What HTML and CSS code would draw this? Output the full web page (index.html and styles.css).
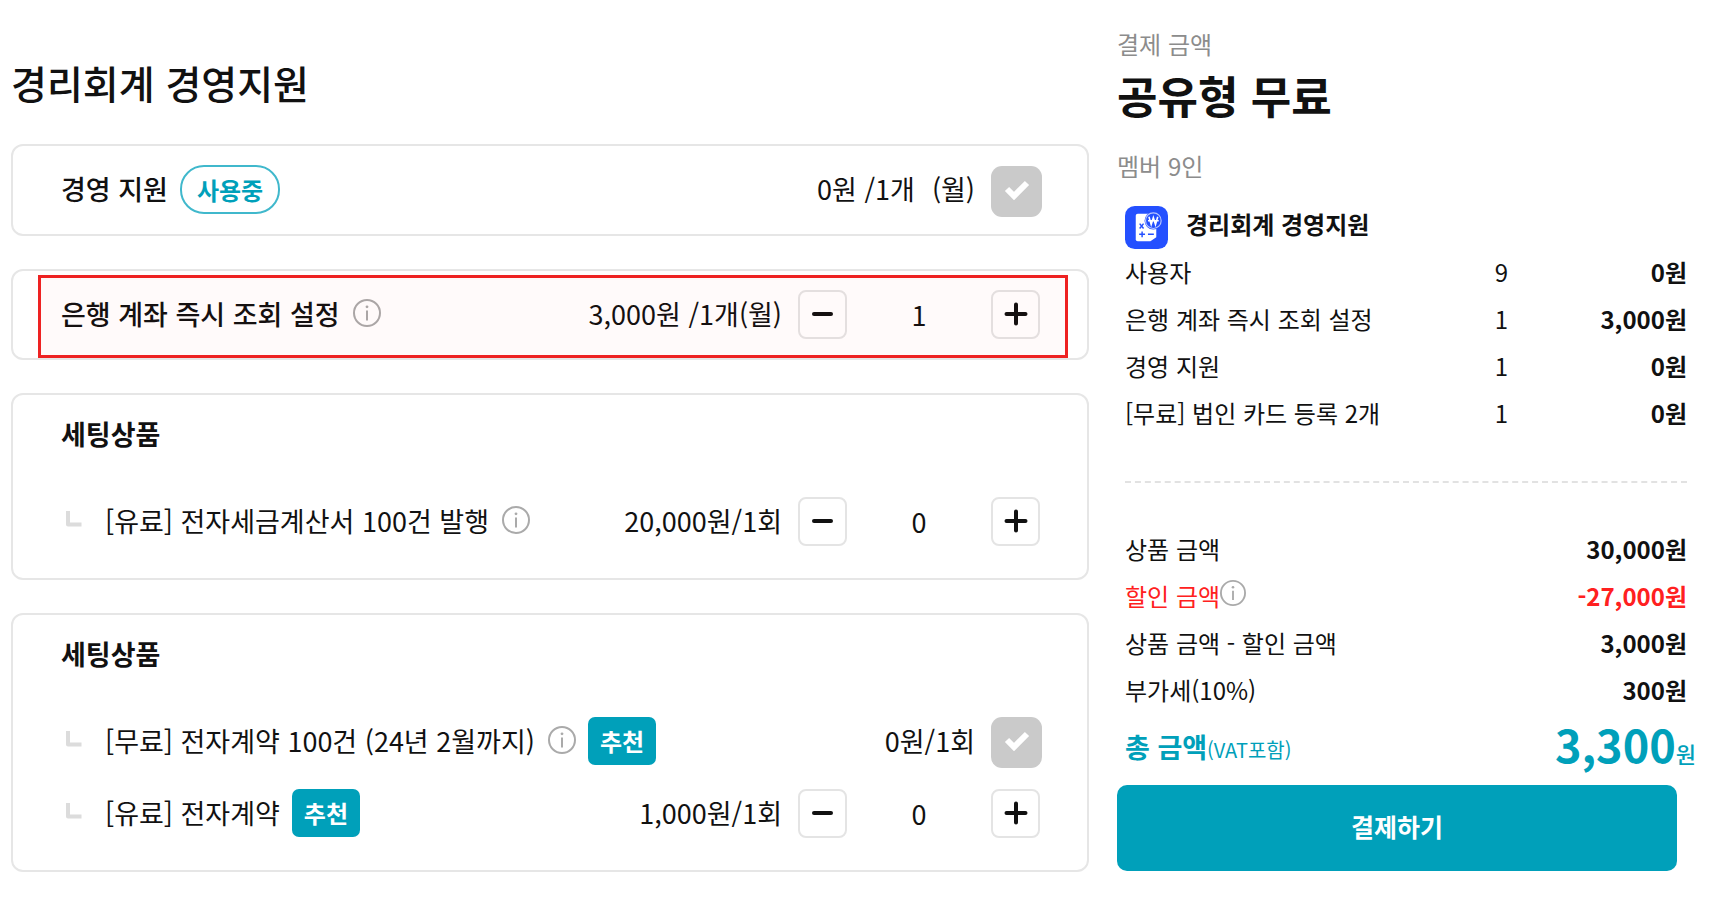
FILE: index.html
```html
<!DOCTYPE html>
<html lang="ko">
<head>
<meta charset="utf-8">
<meta name="viewport" content="width=device-width, initial-scale=1">
<title>경리회계 경영지원</title>
<link rel="stylesheet" href="styles.css">
</head>
<body>
<svg class="sprite" aria-hidden="true">
  <symbol id="info" viewBox="0 0 28 28">
    <circle cx="14" cy="14" r="13" fill="none" stroke="currentColor" stroke-width="2"/>
    <path d="M14 11.5V21.5" fill="none" stroke="currentColor" stroke-width="2"/>
    <circle cx="14" cy="7.8" r="1.4" fill="currentColor"/>
  </symbol>
  <symbol id="branch" viewBox="0 0 16 17">
    <path d="M2 1V14.5H15.5" fill="none" stroke="currentColor" stroke-width="4" stroke-linejoin="round"/>
  </symbol>
  <symbol id="minus" viewBox="0 0 24 24">
    <path d="M3 12H20" fill="none" stroke="currentColor" stroke-width="4" stroke-linecap="round"/>
  </symbol>
  <symbol id="plus" viewBox="0 0 24 24">
    <path d="M2.500 12H21.500M12 2.500V21.500" fill="none" stroke="currentColor" stroke-width="4" stroke-linecap="round"/>
  </symbol>
  <symbol id="check" viewBox="0 0 26 20">
    <path d="M3 9L10 16L23 3" fill="none" stroke="currentColor" stroke-width="6"/>
  </symbol>
</svg>
<div class="page">
  <main class="products">
    <h1 class="title">경리회계 경영지원</h1>

    <section class="card card-single">
      <div class="row">
        <label class="name strong" for="support">경영 지원</label>
        <span class="pill">사용중</span>
        <span class="price"><span>0원 /1개</span><span>(월)</span></span>
        <span class="check"><input type="checkbox" id="support" checked disabled><svg><use href="#check"/></svg></span>
      </div>
    </section>

    <section class="card card-single">
      <div class="row">
        <label class="name strong" for="bank">은행 계좌 즉시 조회 설정</label>
        <button class="info" type="button" aria-label="안내"><svg><use href="#info"/></svg></button>
        <span class="price">3,000원 /1개(월)</span>
        <span class="stepper">
          <button type="button" aria-label="빼기"><svg><use href="#minus"/></svg></button>
          <input type="text" id="bank" inputmode="numeric" value="1">
          <button type="button" aria-label="더하기"><svg><use href="#plus"/></svg></button>
        </span>
      </div>
      <div class="highlight"></div>
    </section>

    <section class="card card-group">
      <h2 class="group-title">세팅상품</h2>
      <div class="row">
        <svg class="branch"><use href="#branch"/></svg>
        <label class="name" for="invoice">[유료] 전자세금계산서 100건 발행</label>
        <button class="info" type="button" aria-label="안내"><svg><use href="#info"/></svg></button>
        <span class="price">20,000원/1회</span>
        <span class="stepper">
          <button type="button" aria-label="빼기"><svg><use href="#minus"/></svg></button>
          <input type="text" id="invoice" inputmode="numeric" value="0">
          <button type="button" aria-label="더하기"><svg><use href="#plus"/></svg></button>
        </span>
      </div>
    </section>

    <section class="card card-group">
      <h2 class="group-title">세팅상품</h2>
      <div class="row">
        <svg class="branch"><use href="#branch"/></svg>
        <label class="name" for="contract-free">[무료] 전자계약 100건 (24년 2월까지)</label>
        <button class="info" type="button" aria-label="안내"><svg><use href="#info"/></svg></button>
        <span class="badge">추천</span>
        <span class="price">0원/1회</span>
        <span class="check"><input type="checkbox" id="contract-free" checked disabled><svg><use href="#check"/></svg></span>
      </div>
      <div class="row">
        <svg class="branch"><use href="#branch"/></svg>
        <label class="name" for="contract">[유료] 전자계약</label>
        <span class="badge">추천</span>
        <span class="price">1,000원/1회</span>
        <span class="stepper">
          <button type="button" aria-label="빼기"><svg><use href="#minus"/></svg></button>
          <input type="text" id="contract" inputmode="numeric" value="0">
          <button type="button" aria-label="더하기"><svg><use href="#plus"/></svg></button>
        </span>
      </div>
    </section>
  </main>

  <aside class="summary">
    <p class="caption">결제 금액</p>
    <h2 class="plan">공유형 무료</h2>
    <p class="caption">멤버 9인</p>

    <div class="brand">
      <svg class="brand-icon" viewBox="0 0 44 44" aria-hidden="true">
        <rect width="44" height="44" rx="10" fill="#2450ff"/>
        <path d="M13 8H32V32L26 36H13Q11 36 11 34V10Q11 8 13 8Z" fill="#fff"/>
        <path d="M15 18L19 23M19 18L15 23M14.500 29H20.500M17.500 26V32M23.500 29H29.500" stroke="#2450ff" stroke-width="1.500" fill="none"/>
        <circle cx="29" cy="15" r="9" fill="#2450ff"/>
        <circle cx="29" cy="15" r="8" fill="#2450ff" stroke="#b9c6ff" stroke-width="1.200"/>
        <path d="M24.500 11L26.800 19L29 12L31.200 19L33.500 11M23.500 15H34.500" stroke="#fff" stroke-width="1.600" fill="none"/>
      </svg>
      <h3 class="brand-name">경리회계 경영지원</h3>
    </div>

    <table class="lines orders">
      <tr><th scope="row">사용자</th><td class="qty">9</td><td class="amount">0원</td></tr>
      <tr><th scope="row">은행 계좌 즉시 조회 설정</th><td class="qty">1</td><td class="amount">3,000원</td></tr>
      <tr><th scope="row">경영 지원</th><td class="qty">1</td><td class="amount">0원</td></tr>
      <tr><th scope="row">[무료] 법인 카드 등록 2개</th><td class="qty">1</td><td class="amount">0원</td></tr>
    </table>

    <hr class="divider">

    <table class="lines">
      <tr><th scope="row">상품 금액</th><td class="amount">30,000원</td></tr>
      <tr class="discount"><th scope="row"><span class="with-info">할인 금액<button class="info small" type="button" aria-label="안내"><svg><use href="#info"/></svg></button></span></th><td class="amount">-27,000원</td></tr>
      <tr><th scope="row">상품 금액 - 할인 금액</th><td class="amount">3,000원</td></tr>
      <tr><th scope="row">부가세(10%)</th><td class="amount">300원</td></tr>
    </table>

    <div class="total">
      <span class="total-label">총 금액<small>(VAT포함)</small></span>
      <strong class="total-value">3,300<small>원</small></strong>
    </div>
    <button class="pay" type="button">결제하기</button>
  </aside>
</div>
</body>
</html>
```
FILE: styles.css
```css
* { box-sizing: border-box; }

body {
  margin: 0;
  background: #fff;
  color: #111;
  font-family: "Noto Sans CJK KR", "Noto Sans", sans-serif;
  font-size: 27px;
  line-height: 40px;
}

h1, h2, h3, p { margin: 0; }

button, input { font: inherit; color: inherit; }

button { padding: 0; cursor: pointer; }

.sprite { display: none; }

.page {
  display: grid;
  grid-template-columns: minmax(0, 1078fr) minmax(0, 579fr);
  column-gap: 28px;
  padding: 0 13px 24px 11px;
}

/* Product list */
.products {
  display: flex;
  flex-direction: column;
  gap: 33px;
}

.title {
  padding-top: 53px;
  font-size: 39px;
  font-weight: 500;
  line-height: 58px;
}

.card {
  position: relative;
  border: 2px solid #e6e6e6;
  border-radius: 12px;
  padding: 0 45px 0 48px;
}

.card-single { padding-top: 19px; padding-bottom: 17px; }

.card-group {
  display: flex;
  flex-direction: column;
  gap: 21px;
  padding-top: 19px;
  padding-bottom: 30px;
}

.group-title {
  margin-bottom: 22px;
  font-size: 27px;
  font-weight: 700;
}

.row {
  display: flex;
  align-items: center;
  min-height: 51px;
}

.name, .price { padding-bottom: 4px; white-space: nowrap; }

.strong { font-weight: 500; }

.branch {
  flex: none;
  width: 16px;
  height: 17px;
  margin: 0 23px 8px 5px;
  color: #dcdcdc;
}

.info {
  flex: none;
  width: 28px;
  height: 28px;
  margin: 0 0 6px 13px;
  border: 0;
  background: none;
  color: #aaa;
}

.info svg { display: block; width: 100%; height: 100%; }

.pill, .badge {
  flex: none;
  margin: 0 0 3px 12px;
  font-size: 24px;
  font-weight: 700;
}

.pill {
  padding: 0 15px;
  border: 2px solid #40b8cc;
  border-radius: 24px;
  color: #00a0ba;
  line-height: 45px;
}

.badge {
  padding: 0 12px;
  border-radius: 7px;
  background: #00a0ba;
  color: #fff;
  line-height: 48px;
}

.price {
  display: flex;
  gap: 17px;
  margin-left: auto;
  margin-right: 16px;
}

.check {
  display: grid;
  place-items: center;
  width: 51px;
  height: 51px;
  border-radius: 11px;
  background: #cacaca;
  color: #fff;
}

.check input, .check svg { grid-area: 1 / 1; }

.check input {
  width: 100%;
  height: 100%;
  margin: 0;
  appearance: none;
}

.check svg { width: 26px; height: 20px; margin-bottom: 3px; }

.stepper {
  display: flex;
  width: 244px;
  padding: 0 2px 2px 0;
}

.stepper button {
  display: grid;
  place-items: center;
  flex: none;
  width: 49px;
  height: 49px;
  border: 2px solid #e4e4e4;
  border-radius: 8px;
  background: none;
}

.stepper svg { width: 24px; height: 24px; margin-bottom: 2px; }

.stepper input {
  flex: 1;
  min-width: 0;
  padding: 0;
  border: 0;
  background: none;
  text-align: center;
}

.highlight {
  position: absolute;
  inset: 4px 19px 0 25px;
  border: 3px solid #ee2222;
  background: rgba(255, 0, 0, 0.02);
  pointer-events: none;
}

/* Payment summary */
.summary {
  padding-top: 26px;
  font-size: 24px;
}

.caption { color: #8c8c8c; line-height: 36px; }

.plan {
  margin: 3px 0 23px;
  font-size: 44px;
  font-weight: 700;
  line-height: 60px;
}

.brand {
  display: flex;
  gap: 18px;
  margin: 22px 0 0 8px;
}

.brand-icon { width: 43px; height: 43px; }

.brand-name {
  font-size: 24px;
  font-weight: 700;
  line-height: 36px;
}

.lines {
  width: calc(100% - 17px);
  margin: 0 9px 0 8px;
  border-collapse: collapse;
  line-height: 47px;
}

.orders { margin-top: -1px; table-layout: fixed; }

.lines th, .lines td { padding: 0; white-space: nowrap; }

.lines th { font-weight: 400; text-align: left; }

.orders th { width: 55%; }

.qty { width: 24%; text-align: center; }

.lines .amount { font-weight: 700; text-align: right; }

.divider {
  margin: 45px 9px 42px 8px;
  border: 0;
  border-top: 2px dashed #e2e2e2;
}

.discount { color: #ff2020; }

.with-info { display: flex; align-items: center; }

.small { width: 26px; height: 26px; margin-left: 0; }

.total {
  display: flex;
  justify-content: space-between;
  align-items: center;
  height: 72px;
  margin-left: 8px;
  padding-bottom: 4px;
  color: #00a0ba;
  line-height: 60px;
}

.total small { line-height: 1; }

.total-label { font-size: 27px; font-weight: 700; }

.total-label small { font-size: 20px; font-weight: 400; }

.total-value {
  padding-bottom: 6px;
  font-size: 45px;
  font-weight: 700;
}

.total-value small { font-size: 22px; font-weight: 500; }

.pay {
  display: block;
  width: calc(100% - 19px);
  height: 86px;
  padding-bottom: 4px;
  border: 0;
  border-radius: 10px;
  background: #00a0ba;
  color: #fff;
  font-size: 25px;
  font-weight: 700;
}
```
